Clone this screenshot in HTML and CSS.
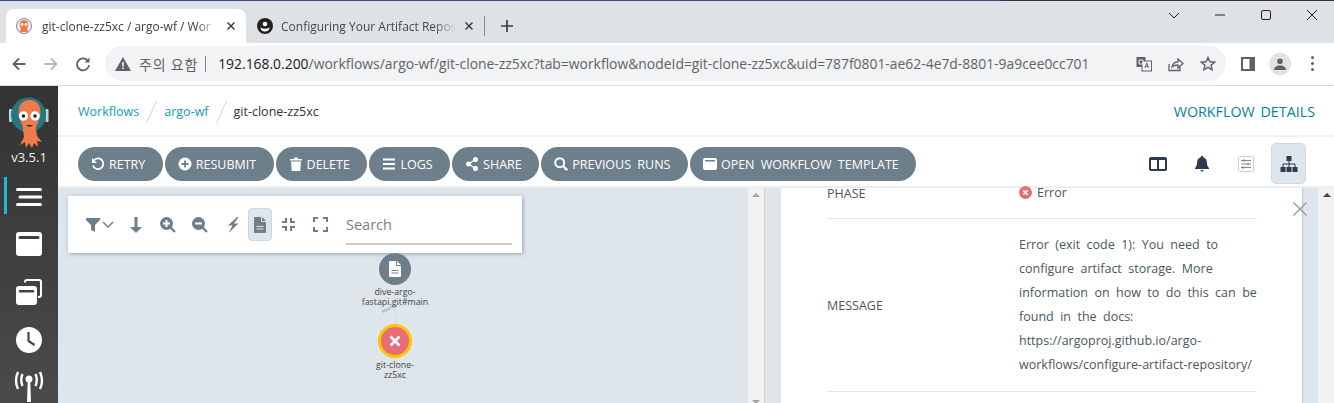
FILE: index.html
```html
<!DOCTYPE html>
<html lang="ko">
<head>
  <meta charset="UTF-8">
  <title>git-clone-zz5xc / argo-wf / Workflows</title>
  <link rel="stylesheet" href="styles.css">
</head>
<body>
  <div class="tabstrip">
    <div class="tab tab-active">
      <svg class="favicon" viewBox="0 0 16 16"><circle cx="8" cy="8" r="7.500" fill="#f3f0f6" stroke="#8d7fb5"/><circle cx="8" cy="6.500" r="4.500" fill="#ef7b4d"/><path d="M5 9h6l1 5H4z" fill="#ef7b4d"/><circle cx="6" cy="6.500" r="1.400" fill="#fff"/><circle cx="10" cy="6.500" r="1.400" fill="#fff"/></svg>
      <span class="tab-title">git-clone-zz5xc / argo-wf / Wor</span>
      <svg class="tab-close" viewBox="0 0 10 10"><path d="M1.500 1.500l7 7M8.500 1.500l-7 7"/></svg>
    </div>
    <div class="tab">
      <svg class="favicon" viewBox="0 0 16 16"><circle cx="8" cy="8" r="8" fill="#222"/><circle cx="8" cy="6" r="2.300" fill="#fff"/><path d="M3.500 9.500c1.500 1 3 1.300 4.500 1.300s3-.3 4.500-1.300c0 2.500-2 4-4.500 4s-4.500-1.500-4.500-4z" fill="#fff"/></svg>
      <span class="tab-title">Configuring Your Artifact Repos</span>
      <svg class="tab-close" viewBox="0 0 10 10"><path d="M1.500 1.500l7 7M8.500 1.500l-7 7"/></svg>
    </div>
    <span class="tab-sep"></span>
    <svg class="new-tab" viewBox="0 0 12 12"><path d="M6 0v12M0 6h12"/></svg>
    <div class="window-btns">
      <svg viewBox="0 0 12 12"><path d="M1 4l5 5 5-5"/></svg>
      <svg viewBox="0 0 12 12"><path d="M1 6h10"/></svg>
      <svg viewBox="0 0 12 12"><rect x="1.500" y="1.500" width="9" height="9" rx="1.500"/></svg>
      <svg viewBox="0 0 12 12"><path d="M1 1l10 10M11 1L1 11"/></svg>
    </div>
  </div>

  <div class="urlbar">
    <svg class="nav-ic" viewBox="0 0 16 16"><path d="M14.500 8H2.500M8 2.500L2.500 8 8 13.500" fill="none" stroke="#5f6368" stroke-width="1.800"/></svg>
    <svg class="nav-ic" viewBox="0 0 16 16"><path d="M1.500 8h12M8 2.500L13.500 8 8 13.500" fill="none" stroke="#b4b7bb" stroke-width="1.800"/></svg>
    <svg class="nav-ic" viewBox="0 0 16 16"><path d="M13.300 5.500A6 6 0 1 0 14 9" fill="none" stroke="#5f6368" stroke-width="1.800"/><path d="M14.500 1.500v5h-5z" fill="#5f6368"/></svg>
    <div class="omnibox">
      <svg class="warn" viewBox="0 0 16 14"><path d="M8 0l8 14H0z" fill="#5f6368"/><path d="M7.200 5h1.600v4.500H7.200zM7.200 10.500h1.600V12H7.200z" fill="#f1f3f4"/></svg>
      <span class="warn-text">주의 요함</span>
      <span class="omni-sep"></span>
      <span class="url"><b>192.168.0.200</b>/workflows/argo-wf/git-clone-zz5xc?tab=workflow&amp;nodeId=git-clone-zz5xc&amp;uid=787f0801-ae62-4e7d-8801-9a9cee0cc701</span>
      <div class="omni-icons">
        <svg viewBox="0 0 16 16"><rect x="0.500" y="1" width="9" height="10" fill="#5f6368"/><rect x="6" y="5" width="9.500" height="10" fill="#f1f3f4" stroke="#5f6368"/><path d="M9 12l1.800-5 1.800 5M9.700 10.500h2.300" fill="none" stroke="#5f6368"/><path d="M3 4h4v4H3z" fill="none" stroke="#f1f3f4"/></svg>
        <svg viewBox="0 0 16 16"><path d="M1 8v6.500h11V11" fill="none" stroke="#5f6368" stroke-width="1.300"/><path d="M4 11c.5-3.500 3-5 6-5V3l5 4.500L10 12V9c-2.500 0-4.500.5-6 2z" fill="none" stroke="#5f6368" stroke-width="1.300"/></svg>
        <svg viewBox="0 0 16 16"><path d="M8 1.500l1.900 4.300 4.600.4-3.500 3 1.100 4.600L8 11.400l-4.100 2.400L5 9.200l-3.500-3 4.600-.4z" fill="none" stroke="#5f6368" stroke-width="1.500"/></svg>
      </div>
    </div>
    <svg class="side-ic" viewBox="0 0 14 14"><rect width="14" height="14" fill="#5f6368"/><rect x="2" y="2" width="6.500" height="10" fill="#fff"/></svg>
    <span class="profile"><svg viewBox="0 0 12 12"><circle cx="6" cy="3.300" r="2.800" fill="#5f6368"/><path d="M0 12c0-3 2.500-4.500 6-4.500s6 1.500 6 4.500z" fill="#5f6368"/></svg></span>
    <span class="dots"><i></i><i></i><i></i></span>
  </div>

  <div class="app">
    <nav class="sidenav">
      <div class="logo">
        <svg viewBox="0 0 40 52" width="40" height="52">
          <rect x="0" y="13" width="3" height="13" rx="1" fill="#b5d8dc"/>
          <rect x="36.500" y="13" width="3" height="13" rx="1" fill="#b5d8dc"/>
          <circle cx="19.500" cy="19" r="17.500" fill="#23797f"/>
          <path d="M9.500 16c0-8 5-12 11-12s11 4 11 12c0 8-4 11-5 18h-12c-1-7-5-10-5-18z" fill="#ef7b4d"/>
          <path d="M14 33h13l1 7 5 6-5-1 1 6-4-4-2 5-3-5-3 5-1-6-5 3 4-8z" fill="#ef7b4d"/>
          <circle cx="14.500" cy="20" r="4.700" fill="#fff"/><circle cx="26" cy="20" r="4.700" fill="#fff"/>
          <circle cx="14.500" cy="20" r="1.800" fill="#222"/><circle cx="26" cy="20" r="1.800" fill="#222"/>
          <path d="M17 29q3.500 3.500 7 0z" fill="#3a2a20"/>
        </svg>
        <span class="version">v3.5.1</span>
      </div>
      <a class="nav-item nav-selected"><svg viewBox="0 0 26 20"><path d="M1.500 2.500h23M4 10h21M1.500 17.500h23"/></svg></a>
      <a class="nav-item"><svg viewBox="0 0 26 24"><path fill-rule="evenodd" d="M3 0h20a3 3 0 0 1 3 3v18a3 3 0 0 1-3 3H3a3 3 0 0 1-3-3V3a3 3 0 0 1 3-3zm1 4a1 1 0 0 0 0 3h18a1 1 0 0 0 0-3z" class="fill"/></svg></a>
      <a class="nav-item"><svg viewBox="0 0 26 26"><path d="M9 3.500V3a2 2 0 0 1 2-2h12a2 2 0 0 1 2 2v13a2 2 0 0 1-2 2h-1" fill="none" stroke="#fff" stroke-width="2"/><path fill-rule="evenodd" d="M3 7h15a3 3 0 0 1 3 3v13a3 3 0 0 1-3 3H3a3 3 0 0 1-3-3V10a3 3 0 0 1 3-3zm1 4a1 1 0 0 0 0 2.500h13a1 1 0 0 0 0-2.500z" class="fill"/></svg></a>
      <a class="nav-item"><svg viewBox="0 0 26 26"><circle cx="13" cy="13" r="13" class="fill"/><path d="M12.500 5v9l6 4" fill="none" stroke="#444" stroke-width="2.200"/></svg></a>
      <a class="nav-item nav-antenna"><svg viewBox="0 0 30 34"><circle cx="15" cy="11" r="3.500" class="fill"/><path d="M13.800 11h2.400l.8 23h-4z" class="fill"/><path d="M8.500 6q-2.500 6 0 12M4 4q-4 9 0 17M21.500 6q2.500 6 0 12M26 4q4 9 0 17" fill="none" stroke="#fff" stroke-width="2.400"/></svg></a>
    </nav>

    <main class="main">
      <header class="topbar">
        <div class="crumbs">
          <a>Workflows</a><span class="crumb-sep"></span><a>argo-wf</a><span class="crumb-sep"></span><span class="crumb-now">git-clone-zz5xc</span>
        </div>
        <h1 class="page-title">WORKFLOW DETAILS</h1>
      </header>

      <div class="actions">
        <button class="btn"><svg viewBox="0 0 14 14"><path d="M3 3.300A5.300 5.300 0 1 1 2 8.500" fill="none" stroke="#fff" stroke-width="1.800"/><path d="M1 1v5h5z" fill="#fff"/></svg>RETRY</button>
        <button class="btn"><svg viewBox="0 0 14 14"><circle cx="7" cy="7" r="6.500" fill="#fff"/><path d="M7 3.500v7M3.500 7h7" stroke="#6d7f8b" stroke-width="1.800"/></svg>RESUBMIT</button>
        <button class="btn"><svg viewBox="0 0 14 14"><path d="M1 2h4l.5-1.500h3L9 2h4v1.500H1zM2 4.500h10l-.8 9.500H2.800z" fill="#fff"/></svg>DELETE</button>
        <button class="btn"><svg viewBox="0 0 14 14"><path d="M1 2.500h12M1 7h12M1 11.500h12" stroke="#fff" stroke-width="2"/></svg>LOGS</button>
        <button class="btn"><svg viewBox="0 0 12 14"><circle cx="2.500" cy="7" r="2.500" fill="#fff"/><circle cx="9.500" cy="2.500" r="2.500" fill="#fff"/><circle cx="9.500" cy="11.500" r="2.500" fill="#fff"/><path d="M2.500 7l7-4.500M2.500 7l7 4.500" stroke="#fff" stroke-width="1.300"/></svg>SHARE</button>
        <button class="btn"><svg viewBox="0 0 14 14"><circle cx="5.700" cy="5.700" r="4.500" fill="none" stroke="#fff" stroke-width="2"/><path d="M9 9l4.200 4.200" stroke="#fff" stroke-width="2.400"/></svg>PREVIOUS RUNS</button>
        <button class="btn"><svg viewBox="0 0 14 14"><path fill-rule="evenodd" d="M2 1h10a2 2 0 0 1 2 2v8a2 2 0 0 1-2 2H2a2 2 0 0 1-2-2V3a2 2 0 0 1 2-2zm.5 2a.700.700 0 0 0 0 1.500h9a.700.700 0 0 0 0-1.500z" fill="#fff"/></svg>OPEN WORKFLOW TEMPLATE</button>
        <div class="view-tools">
          <span class="view-btn"><svg viewBox="0 0 18 14" width="18" height="14"><path fill-rule="evenodd" d="M2 0h14a2 2 0 0 1 2 2v10a2 2 0 0 1-2 2H2a2 2 0 0 1-2-2V2a2 2 0 0 1 2-2zm0 3v9h6V3zm8 0v9h6V3z" fill="#2f3b4d"/></svg></span>
          <span class="view-btn"><svg viewBox="0 0 14 16" width="14" height="16"><path d="M7 0c.8 0 1.300.5 1.300 1.200C11 2 12 4.500 12 7c0 2.500 1 4 2 5v1H0v-1c1-1 2-2.500 2-5 0-2.500 1-5 3.700-5.800C5.700.5 6.200 0 7 0zM5.500 14h3a1.500 1.500 0 0 1-3 0z" fill="#2f3b4d"/></svg></span>
          <span class="view-btn"><svg viewBox="0 0 16 16" width="16" height="16"><rect x="0.500" y="0.500" width="15" height="15" rx="1" fill="#fff" stroke="#e8c9a8"/><path d="M3 4.500h10M3 8h10M3 11.500h10" stroke="#7d8a94"/><path d="M6 3v3M10 6.500v3M5 10v3" stroke="#7d8a94"/></svg></span>
          <span class="view-btn view-on"><svg viewBox="0 0 18 16" width="18" height="16"><path d="M9 5v3M3 11V8h12v3M9 8v3" fill="none" stroke="#2f3b4d"/><rect x="6.500" y="0" width="5" height="5" fill="#2f3b4d"/><rect x="0.500" y="11" width="5" height="5" fill="#2f3b4d"/><rect x="6.500" y="11" width="5" height="5" fill="#2f3b4d"/><rect x="12.500" y="11" width="5" height="5" fill="#2f3b4d"/></svg></span>
        </div>
      </div>

      <div class="workspace">
        <section class="graph">
          <div class="graph-tools">
            <span class="gt gt-filter"><svg viewBox="0 0 14 14" width="14" height="14"><path d="M0 0h14v2L9 7v7L5 12V7L0 2z"/></svg><svg class="chev" viewBox="0 0 12 7" width="12" height="7"><path d="M1 1l5 5 5-5" fill="none" stroke="#6d7f8b" stroke-width="1.500"/></svg></span>
            <span class="gt"><svg viewBox="0 0 12 16" width="12" height="16"><path d="M4.500 0h3v10H12l-6 6-6-6h4.500z"/></svg></span>
            <span class="gt"><svg viewBox="0 0 16 16" width="16" height="16"><path fill-rule="evenodd" d="M6.500 0a6.500 6.500 0 1 1 0 13 6.500 6.500 0 0 1 0-13zM5.500 3v2.500H3v2h2.500V10h2V7.500H10v-2H7.500V3z"/><path d="M10.500 10.500L15 15" stroke="#6d7f8b" stroke-width="2.200"/></svg></span>
            <span class="gt"><svg viewBox="0 0 16 16" width="16" height="16"><path fill-rule="evenodd" d="M6.500 0a6.500 6.500 0 1 1 0 13 6.500 6.500 0 0 1 0-13zM3 5.500v2h7v-2z"/><path d="M10.500 10.500L15 15" stroke="#6d7f8b" stroke-width="2.200"/></svg></span>
            <span class="gt"><svg viewBox="0 0 13 16" width="13" height="16"><path d="M11 0L2 8.500h4.500L2.500 16l10-9.500H8L12.500 0z"/></svg></span>
            <span class="gt gt-on"><svg viewBox="0 0 12 16" width="12" height="16"><path fill-rule="evenodd" d="M0 1a1 1 0 0 1 1-1h6v4a1 1 0 0 0 1 1h4v10a1 1 0 0 1-1 1H1a1 1 0 0 1-1-1zm2.500 8v1h7V9zm0 2.500v1h7v-1z"/><path d="M8 0l4 4H8z"/></svg></span>
            <span class="gt"><svg viewBox="0 0 15 15" width="15" height="15"><path d="M5 1v4H1M10 1v4h4M5 14v-4H1M10 14v-4h4" fill="none" stroke="#6d7f8b" stroke-width="2"/></svg></span>
            <span class="gt"><svg viewBox="0 0 15 15" width="15" height="15"><path d="M1 5V1h4M10 1h4v4M1 10v4h4M10 14h4v-4" fill="none" stroke="#6d7f8b" stroke-width="2"/></svg></span>
            <span class="graph-search">Search</span>
          </div>

          <span class="edge"></span>
          <span class="edge-label">source</span>
          <div class="node node-pod">
            <span class="node-dot"><svg viewBox="0 0 12 16" width="12" height="16"><path fill-rule="evenodd" d="M0 1a1 1 0 0 1 1-1h6v4a1 1 0 0 0 1 1h4v10a1 1 0 0 1-1 1H1a1 1 0 0 1-1-1zm2.500 8v1h7V9zm0 2.500v1h7v-1z" fill="#fff"/><path d="M8 0l4 4H8z" fill="#fff"/></svg></span>
            <span class="node-label">dive-argo-<br>fastapi.git#main</span>
          </div>
          <div class="node node-err">
            <span class="node-dot"><svg viewBox="0 0 12 12" width="12" height="12"><path d="M1.500 1.500l9 9M10.500 1.500l-9 9" stroke="#fff" stroke-width="2.600"/></svg></span>
            <span class="node-label">git-clone-<br>zz5xc</span>
          </div>
        </section>

        <div class="scrollbar"><i class="arrow-up"></i><i class="arrow-down"></i></div>

        <section class="details">
          <div class="row row-phase">
            <span class="row-key">PHASE</span>
            <span class="row-val"><svg viewBox="0 0 14 14" width="13" height="13"><circle cx="7" cy="7" r="7" fill="#e96d76"/><path d="M4.800 4.800l4.400 4.400M9.200 4.800l-4.400 4.400" stroke="#fff" stroke-width="1.800"/></svg>Error</span>
          </div>
          <div class="row row-msg">
            <span class="row-key">MESSAGE</span>
            <span class="row-val">Error (exit code 1): You need to configure artifact storage. More information on how to do this can be found in the docs: https://argoproj.github.io/argo-workflows/configure-artifact-repository/</span>
          </div>
        </section>
        <svg class="details-close" viewBox="0 0 14 14" width="14" height="14"><path d="M.5.500l13 13M13.500.500l-13 13" stroke="#8fa4b1" stroke-width="1.500"/></svg>

        <div class="scrollbar scrollbar-end"><i class="arrow-up"></i></div>
      </div>
    </main>
  </div>
</body>
</html>
```

FILE: styles.css
```css
* {
  box-sizing: border-box;
}
html, body {
  margin: 0;
  height: 403px;
  overflow: hidden;
  background: #fff;
  font-family: "Open Sans", "Noto Sans CJK KR", sans-serif;
}

/* browser chrome */
.tabstrip {
  height: 43px;
  background: #dee1e6;
  border-top: 1px solid;
  border-image: linear-gradient(to right, #3f4b91 75%, #333 75%) 1;
  padding: 8px 0 0 6px;
  display: flex;
  align-items: stretch;
  position: relative;
}
.tab {
  width: 240px;
  display: flex;
  align-items: center;
  padding: 0 10px;
  font-size: 12px;
  color: #45494d;
}
.tab-active {
  background: #fff;
  border-radius: 8px 8px 0 0;
  color: #3c4043;
}
.tab + .tab {
  width: 238px;
  padding-left: 11px;
}
.favicon {
  width: 16px;
  height: 16px;
  flex: none;
}
.tab-title {
  flex: 1;
  margin-left: 10px;
  white-space: nowrap;
  overflow: hidden;
  -webkit-mask-image: linear-gradient(to right, #000 88%, transparent);
  mask-image: linear-gradient(to right, #000 88%, transparent);
}
.tab + .tab .tab-title {
  margin-left: 8px;
}
.tab-close {
  width: 10px;
  height: 10px;
  margin-left: 8px;
  flex: none;
  fill: none;
  stroke: #3c4043;
  stroke-width: 1.500;
}
.tab-sep {
  width: 1px;
  height: 20px;
  margin: 7px 0 0 0;
  background: #8a8e94;
}
.new-tab {
  width: 12px;
  height: 12px;
  margin: 11px 0 0 16px;
  fill: none;
  stroke: #3c4043;
  stroke-width: 1.700;
}
.window-btns {
  margin-left: auto;
  display: flex;
  gap: 34px;
  padding: 0 16px 0 0;
  height: 14px;
}
.window-btns svg {
  width: 12px;
  height: 12px;
  fill: none;
  stroke: #222;
  stroke-width: 1;
}

.urlbar {
  height: 43px;
  display: flex;
  align-items: center;
  padding: 0 14px 1px 11px;
  background: #fff;
  border-bottom: 1px solid #dadce0;
  position: relative;
}
.nav-ic {
  width: 16px;
  height: 16px;
  margin-right: 16px;
  flex: none;
}
.omnibox {
  width: 1121px;
  height: 35px;
  margin-left: -2px;
  border-radius: 18px;
  background: #f1f3f4;
  display: flex;
  align-items: center;
  padding: 0 10px;
  font-size: 14px;
  color: #5f6368;
}
.warn {
  width: 16px;
  height: 14px;
  flex: none;
}
.warn-text {
  margin-left: 8px;
  font-size: 14px;
  letter-spacing: 0.800px;
  color: #5f6368;
  white-space: nowrap;
}
.omni-sep {
  width: 1px;
  height: 16px;
  margin: 0 12px 0 7px;
  background: #80868b;
}
.url {
  white-space: nowrap;
  font-size: 13.900px;
}
.url b {
  font-weight: 400;
  color: #202124;
}
.omni-icons {
  margin-left: auto;
  display: flex;
  gap: 16px;
}
.omni-icons svg {
  width: 16px;
  height: 16px;
}
.side-ic {
  width: 14px;
  height: 14px;
  margin-left: 15px;
}
.profile {
  width: 22px;
  height: 22px;
  margin-left: 14px;
  border-radius: 50%;
  background: #e1e3e8;
  padding: 5px;
  display: flex;
}
.dots {
  margin-left: 20px;
  display: flex;
  flex-direction: column;
  gap: 3px;
}
.dots i {
  width: 3px;
  height: 3px;
  border-radius: 50%;
  background: #5f6368;
}

/* argo app */
.app {
  height: 317px;
  display: flex;
  overflow: hidden;
}
.sidenav {
  width: 58px;
  flex: none;
  background: linear-gradient(#333, #4a4a4a);
  display: flex;
  flex-direction: column;
}
.logo {
  height: 91px;
  flex: none;
  padding-top: 10px;
  display: flex;
  flex-direction: column;
  align-items: center;
}
.version {
  margin-top: 1px;
  font-size: 13px;
  color: #f0f0f0;
  line-height: 16px;
}
.nav-item {
  height: 48px;
  flex: none;
  display: flex;
  align-items: center;
  justify-content: center;
  padding-right: 1px;
}
.nav-item svg {
  width: 26px;
  height: 26px;
  fill: none;
  stroke: none;
}
.nav-item .fill {
  fill: #fff;
}
.nav-selected {
  position: relative;
  height: 37px;
  margin-bottom: 6px;
  padding-top: 3px;
}
.nav-selected svg {
  height: 20px;
}
.nav-selected svg path {
  stroke: #fff;
  stroke-width: 3;
  stroke-linecap: round;
}
.nav-selected::before {
  content: "";
  position: absolute;
  left: 4px;
  top: 0;
  bottom: 0;
  width: 3px;
  background: #1dbcd0;
}
.nav-antenna {
  margin-top: -3px;
}
.nav-antenna svg {
  width: 30px;
  height: 34px;
}

.main {
  flex: 1;
  min-width: 0;
  display: flex;
  flex-direction: column;
}
.topbar {
  height: 51px;
  padding: 2px 19px 0 20px;
  display: flex;
  align-items: center;
  justify-content: space-between;
  border-bottom: 2px solid #eef1f3;
}
.crumbs {
  display: flex;
  align-items: center;
  font-size: 12.500px;
  color: #0d9dba;
}
.crumb-sep {
  width: 1px;
  height: 24px;
  margin: 0 12px;
  background: #ccd6dd;
  transform: rotate(25deg);
}
.crumb-now {
  color: #333;
}
.page-title {
  margin: 0;
  font-size: 14.300px;
  font-weight: 400;
  word-spacing: 2px;
  color: #0a7f9d;
}
.actions {
  height: 51px;
  padding: 10px 28px 0 20px;
  display: flex;
  gap: 2px;
  border-bottom: 2px solid #eef1f3;
}
.btn {
  height: 34px;
  padding: 0 17.500px 0 13px;
  border: none;
  border-radius: 17px;
  background: #6d7f8b;
  color: #fff;
  font: 12.500px "Open Sans", sans-serif;
  word-spacing: 3px;
  display: flex;
  align-items: center;
  gap: 4px;
  white-space: nowrap;
}
.btn svg {
  width: 14px;
  height: 14px;
  flex: none;
}
.view-tools {
  margin-left: auto;
  display: flex;
  align-items: center;
  height: 41px;
  margin-top: -4px;
}
.view-btn {
  width: 44px;
  height: 41px;
  display: flex;
  align-items: center;
  justify-content: center;
}
.view-on {
  width: 35px;
  margin-left: 3px;
  background: #dde6ec;
  border: 1px solid #cdd8df;
  border-radius: 5px;
}

.workspace {
  flex: 1;
  min-height: 0;
  display: flex;
  position: relative;
  background: #dee6eb;
}
.graph {
  width: 690px;
  flex: none;
  padding: 8px 10px;
  position: relative;
}
.graph-tools {
  width: 454px;
  height: 57px;
  background: #fff;
  box-shadow: 1px 1px 4px rgba(80, 100, 120, 0.5);
  display: flex;
  align-items: center;
  padding: 0 10px 0 8px;
}
.gt {
  width: 32px;
  height: 33px;
  display: flex;
  align-items: center;
  justify-content: center;
  fill: #6d7f8b;
  flex: none;
}
.gt-filter {
  width: 44px;
  padding-left: 4px;
}
.chev {
  margin-left: 2px;
}
.gt-on {
  width: 24px;
  background: #dde6ec;
  border: 1px solid #cdd8df;
  border-radius: 4px;
}
.graph-search {
  width: 166px;
  height: 37px;
  margin-left: 10px;
  margin-top: 4px;
  border-bottom: 2px solid #ccc;
  color: #7a7f84;
  font-size: 14.500px;
  line-height: 34px;
}

/* graph nodes sit on a free canvas */
.node {
  position: absolute;
  left: 287px;
  width: 100px;
  display: flex;
  flex-direction: column;
  align-items: center;
  text-align: center;
}
.node-pod {
  top: 65px;
}
.node-err {
  top: 136px;
}
.node-dot {
  width: 32px;
  height: 32px;
  border-radius: 50%;
  background: #6d7f8b;
  display: flex;
  align-items: center;
  justify-content: center;
}
.node-err .node-dot {
  width: 34px;
  height: 34px;
  background: #e96d76;
  border: 3px solid #fdc500;
}
.node-label {
  margin-top: 2px;
  font-size: 8.800px;
  line-height: 10px;
  color: #444;
}
.edge {
  position: absolute;
  left: 337px;
  top: 110px;
  height: 28px;
  border-left: 1px dotted #ccd3d9;
}
.edge-label {
  position: absolute;
  left: 323px;
  top: 117px;
  font-size: 5px;
  color: #888;
  transform: rotate(-25deg);
}

.scrollbar {
  width: 17px;
  flex: none;
  background: #f1f1f1;
  border-right: 1px solid #d0d5d9;
  position: relative;
}
.arrow-up, .arrow-down {
  position: absolute;
  left: 4px;
  border-left: 4px solid transparent;
  border-right: 4px solid transparent;
}
.arrow-up {
  top: 5px;
  border-bottom: 4px solid #a3a3a3;
}
.arrow-down {
  bottom: -1px;
  border-top: 4px solid #a3a3a3;
}
.details {
  width: 521px;
  flex: none;
  margin-left: 16px;
  padding: 0 45px 0 46px;
  background: #fff;
  box-shadow: 1px 0 1px #c5ced5;
  font-size: 12.500px;
  word-spacing: 3.200px;
  color: #495763;
}
.row {
  display: flex;
  align-items: center;
  border-bottom: 1px solid #e3e8ec;
}
.row-phase {
  height: 31px;
  padding-bottom: 20px;
}
.row-msg {
  height: 173px;
}
.row-key {
  width: 192px;
  flex: none;
}
.row-val {
  flex: 1;
  line-height: 24px;
  display: block;
}
.row-val svg {
  vertical-align: -2px;
  margin-right: 5px;
}
.details-close {
  position: absolute;
  left: 1235px;
  top: 14px;
}
.scrollbar-end {
  width: 16px;
  margin-left: 16px;
  border-right: none;
}
.scrollbar-end .arrow-up {
  left: 5px;
  border-bottom-color: #444;
}
```
